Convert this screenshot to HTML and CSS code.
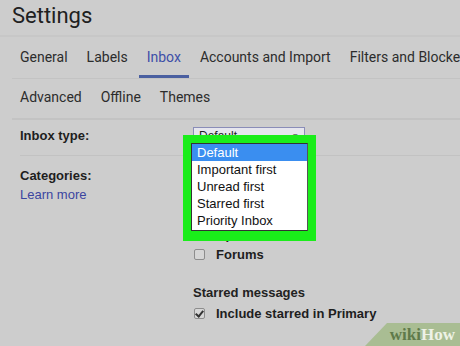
FILE: index.html
```html
<!DOCTYPE html>
<html lang="en">
<head>
  <meta charset="UTF-8">
  <title>Settings</title>
  <link rel="stylesheet" href="styles.css">
</head>
<body>
  <div class="page">
    <h1 class="page-title">Settings</h1>

    <nav class="tab-bar">
      <div class="tab-row">
        <span class="tab">General</span>
        <span class="tab">Labels</span>
        <span class="tab tab-active">Inbox</span>
        <span class="tab">Accounts and Import</span>
        <span class="tab">Filters and Blocked Addresses</span>
      </div>
      <div class="tab-row tab-row-second">
        <span class="tab">Advanced</span>
        <span class="tab">Offline</span>
        <span class="tab">Themes</span>
      </div>
    </nav>

    <div class="setting-row setting-inbox-type">
      <div class="setting-label">Inbox type:</div>
      <div class="setting-value">
        <div class="select-box">Default<span class="select-arrow">&#9662;</span></div>
      </div>
    </div>

    <div class="setting-row setting-categories">
      <div class="setting-label">
        Categories:
        <a class="learn-more">Learn more</a>
      </div>
      <div class="setting-value">
        <label class="check-row"><span class="check-box checked"></span>Primary</label>
        <label class="check-row"><span class="check-box"></span>Social</label>
        <label class="check-row"><span class="check-box"></span>Promotions</label>
        <label class="check-row"><span class="check-box"></span>Updates</label>
        <label class="check-row"><span class="check-box"></span>Forums</label>

        <div class="sub-heading">Starred messages</div>
        <label class="check-row"><span class="check-box checked"></span>Include starred in Primary</label>
      </div>
    </div>
  </div>

  <!-- dropdown opened over the page, outlined by the green highlight -->
  <div class="highlight">
    <ul class="listbox">
      <li class="option option-selected">Default</li>
      <li class="option">Important first</li>
      <li class="option">Unread first</li>
      <li class="option">Starred first</li>
      <li class="option">Priority Inbox</li>
      <li class="option">Multiple Inboxes</li>
    </ul>
  </div>

  <div class="watermark"><span class="wm-wiki">wiki</span><span class="wm-how">How</span></div>
</body>
</html>
```

FILE: styles.css
```css
:root {
  --page-bg: #cdcdcd;
  --text: #222;
  --muted-line: #c3c3c3;
  --tab-blue: #3d4fa8;
  --link-blue: #3b45a0;
  --green: #1aed1a;
  --select-blue: #3a8ef0;
}

body {
  margin: 0;
  width: 460px;
  height: 346px;
  overflow: hidden;
  background: var(--page-bg);
  color: var(--text);
  font-family: Roboto, "Open Sans", sans-serif;
  position: relative;
}

.page-title {
  margin: 0;
  height: 35px;
  padding-left: 12px;
  font-weight: 400;
  font-size: 22px;
  line-height: 32px;
  color: #202020;
  border-bottom: 2px solid #c7c7c7;
}

.tab-bar {
  padding-left: 12px;
}

.tab-row {
  display: flex;
  gap: 3px;
  height: 41px;
  border-bottom: 1px solid var(--muted-line);
  white-space: nowrap;
}

.tab-row-second {
  height: 39px;
  border-bottom: 2px solid var(--muted-line);
}

.tab {
  padding: 0 8px;
  font-size: 14px;
  color: #2c2c2c;
  display: flex;
  align-items: center;
  padding-top: 2px;
  border-bottom: 3px solid transparent;
}

.tab-row-second .tab {
  padding-top: 0;
  padding-bottom: 4px;
  border-bottom: 0;
}

.tab-active {
  color: var(--tab-blue);
  border-bottom-color: #4a5fa0;
}

.setting-row {
  display: grid;
  grid-template-columns: 173px 1fr;
  margin-left: 20px;
  font-family: "Liberation Sans", Arial, sans-serif;
  font-size: 13px;
}

.setting-inbox-type {
  height: 35px;
  border-bottom: 1px solid #c2c2c2;
}

.setting-inbox-type .setting-label {
  padding-top: 8px;
}

.setting-label {
  font-weight: 700;
  color: #1e1e1e;
}

.setting-categories .setting-label {
  padding-top: 12px;
}

.learn-more {
  display: block;
  margin-top: 4px;
  font-weight: 400;
  color: var(--link-blue);
}

.setting-value {
  padding-top: 7px;
}

.select-box {
  width: 105px;
  height: 16px;
  padding-left: 5px;
  border: 1px solid #8a8db8;
  background: #e6e6ee;
  font-size: 12px;
  line-height: 16px;
  position: relative;
}

.select-arrow {
  position: absolute;
  right: 6px;
  top: 0;
  font-size: 9px;
}

.setting-categories .setting-value {
  padding-top: 8px;
}

.check-row {
  display: flex;
  align-items: center;
  height: 20px;
  font-weight: 700;
  color: #1e1e1e;
}

.check-box {
  width: 9px;
  height: 9px;
  margin: 0 11px 0 1px;
  border: 1px solid #8d8d8d;
  border-radius: 2px;
  background: #d6d6d6;
  position: relative;
}

.check-box.checked::after {
  content: "";
  position: absolute;
  left: 2px;
  top: 0;
  width: 3px;
  height: 6px;
  border: solid #333;
  border-width: 0 2px 2px 0;
  transform: rotate(40deg);
}

.sub-heading {
  margin-top: 19px;
  height: 20px;
  line-height: 20px;
  font-weight: 700;
}

.highlight {
  position: absolute;
  left: 183px;
  top: 135px;
  width: 117px;
  height: 90px;
  padding: 8px;
  background: var(--green);
  overflow: hidden;
}

.listbox {
  list-style: none;
  margin: 0;
  padding: 0;
  height: 88px;
  background: #fff;
  border: 1px solid #333;
  border-right-color: #555;
  box-sizing: border-box;
  overflow: hidden;
  font-family: "Liberation Sans", Arial, sans-serif;
  font-size: 13px;
}

.option {
  height: 17px;
  line-height: 17px;
  padding-left: 5px;
  color: #111;
}

.option-selected {
  background: var(--select-blue);
  color: #fff;
}

.watermark {
  position: absolute;
  right: 0;
  bottom: 0;
  width: 90px;
  height: 23px;
  padding-right: 5px;
  background: #a9bd93;
  clip-path: polygon(22px 0, 100% 0, 100% 100%, 0 100%);
  font-family: "Liberation Serif", serif;
  font-weight: 700;
  font-size: 17px;
  line-height: 24px;
  text-align: right;
}

.wm-wiki {
  color: #5f7a4a;
}

.wm-how {
  color: #eef2e6;
}
```
